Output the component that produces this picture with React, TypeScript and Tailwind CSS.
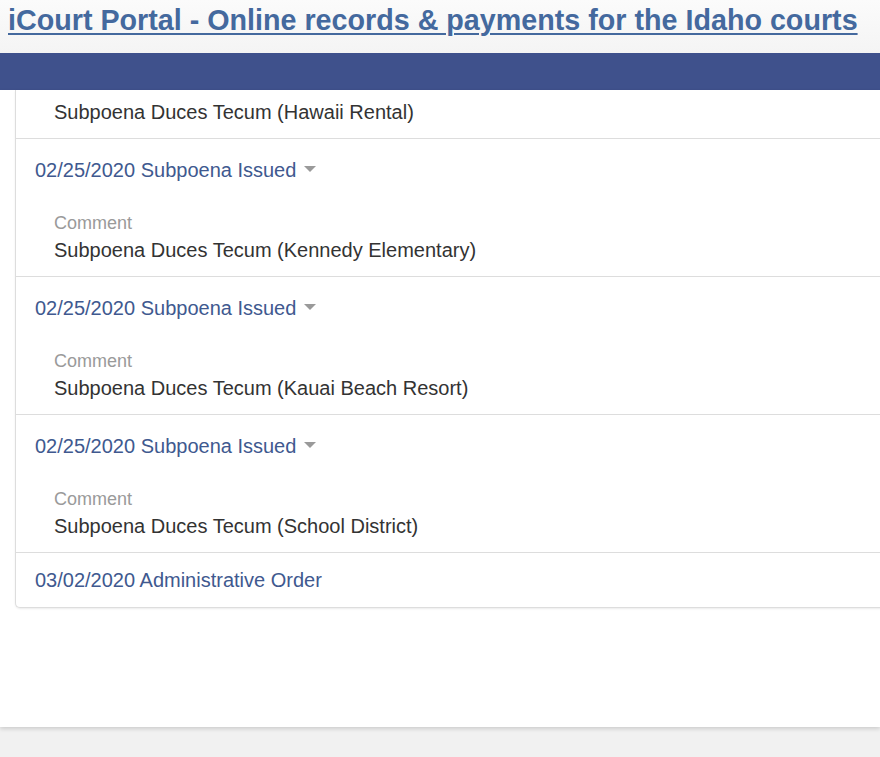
import React from "react";

function Caret() {
  return (
    <svg width="12" height="7" viewBox="0 0 12 7" className="ml-[8px] inline-block" aria-hidden>
      <path d="M0 0 L12 0 L6 6 Z" fill="#9a9a9a" />
    </svg>
  );
}

function Row({ date, title, comment }: { date: string; title: string; comment: string }) {
  return (
    <div className="border-b border-[#dddddd] h-[138px]">
      <div className="h-[61px] flex items-center pl-[19px] text-[#40598f]">
        <span>{date} {title}</span>
        <Caret />
      </div>
      <div className="pl-[38px]">
        <div className="text-[#9a9a9a] text-[18px] leading-[20px] mt-[13px]">Comment</div>
        <div className="text-[#333333] leading-[28px] mt-[3px]">{comment}</div>
      </div>
    </div>
  );
}

export default function App() {
  return (
    <div className="w-[880px] h-[757px] overflow-hidden bg-[#f1f1f1]" style={{ fontFamily: '"Liberation Sans", Arial, sans-serif' }}>
      <div className="h-[53px] bg-gradient-to-b from-[#fbfbfb] to-[#f4f4f4] pl-[8px] pt-[4px]">
        <a href="#" className="block text-[28.7px] font-bold text-[#44699e] underline decoration-[2px] underline-offset-[3px] leading-[33px] whitespace-nowrap">
          iCourt Portal - Online records &amp; payments for the Idaho courts
        </a>
      </div>
      <div className="h-[37px] bg-[#3f518c]" />
      <div className="h-[637px] bg-white pl-[15px] shadow-[0_2px_4px_rgba(0,0,0,0.15)]">
        <div className="w-[900px] border-l border-b border-[#dddddd] rounded-bl-[5px] shadow-[0_1px_2px_rgba(0,0,0,0.08)] text-[20px] bg-white">
          <div className="border-b border-[#dddddd] h-[49px] flex items-center pl-[38px] text-[#333333]">
            <span className="-mt-[4px]">Subpoena Duces Tecum (Hawaii Rental)</span>
          </div>
          <Row date="02/25/2020" title="Subpoena Issued" comment="Subpoena Duces Tecum (Kennedy Elementary)" />
          <Row date="02/25/2020" title="Subpoena Issued" comment="Subpoena Duces Tecum (Kauai Beach Resort)" />
          <Row date="02/25/2020" title="Subpoena Issued" comment="Subpoena Duces Tecum (School District)" />
          <div className="h-[54px] flex items-center pl-[19px] text-[#40598f]">
            <span>03/02/2020 Administrative Order</span>
          </div>
        </div>
      </div>
    </div>
  );
}
